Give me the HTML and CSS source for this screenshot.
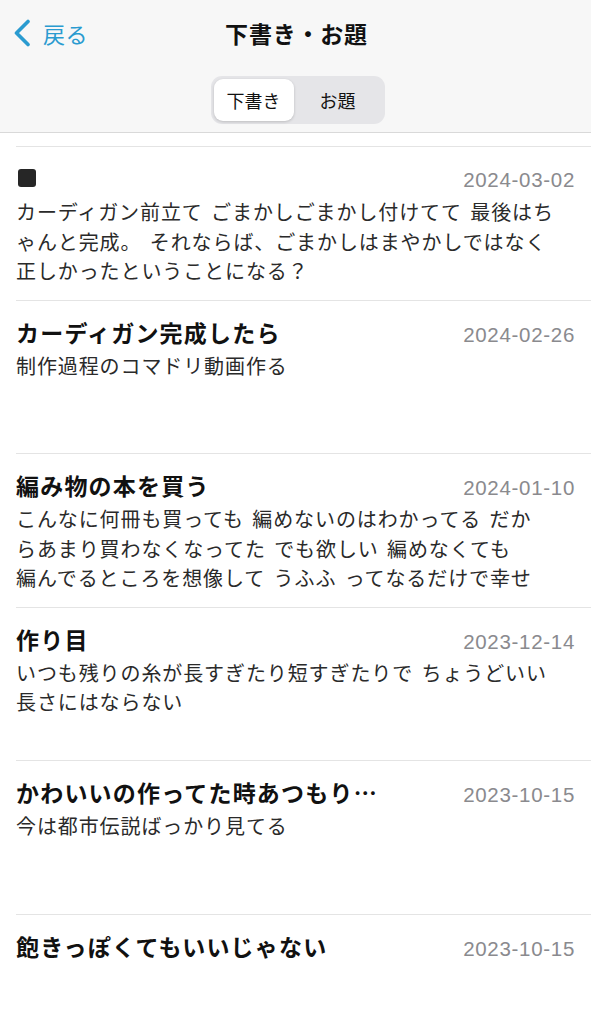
FILE: index.html
```html
<!DOCTYPE html>
<html lang="ja">
<head>
<meta charset="utf-8">
<link rel="stylesheet" href="styles.css">
</head>
<body>
<header class="header">
  <div class="topbar">
    <a class="back">
      <svg class="chev" width="18" height="28" viewBox="0 0 18 28"><path d="M15 2.5 L3.5 14 L15 25.5" fill="none" stroke="#2a9bd0" stroke-width="3.6" stroke-linecap="round" stroke-linejoin="round"/></svg>
      <span class="back-label">戻る</span>
    </a>
    <h1 class="title">下書き・お題</h1>
  </div>
  <div class="seg-wrap">
    <div class="seg">
      <div class="seg-item active">下書き</div>
      <div class="seg-item">お題</div>
    </div>
  </div>
</header>
<main class="list">
  <div class="row">
    <div class="row-head"><span class="row-title"><span class="square"></span></span><span class="date">2024-03-02</span></div>
    <p class="body">カーディガン前立て ごまかしごまかし付けてて 最後はち<br>ゃんと完成。 それならば、ごまかしはまやかしではなく<br>正しかったということになる？</p>
  </div>
  <div class="row">
    <div class="row-head"><span class="row-title">カーディガン完成したら</span><span class="date">2024-02-26</span></div>
    <p class="body">制作過程のコマドリ動画作る</p>
  </div>
  <div class="row">
    <div class="row-head"><span class="row-title">編み物の本を買う</span><span class="date">2024-01-10</span></div>
    <p class="body">こんなに何冊も買っても 編めないのはわかってる だか<br>らあまり買わなくなってた でも欲しい 編めなくても<br>編んでるところを想像して うふふ ってなるだけで幸せ</p>
  </div>
  <div class="row">
    <div class="row-head"><span class="row-title">作り目</span><span class="date">2023-12-14</span></div>
    <p class="body">いつも残りの糸が長すぎたり短すぎたりで ちょうどいい<br>長さにはならない</p>
  </div>
  <div class="row">
    <div class="row-head"><span class="row-title">かわいいの作ってた時あつもり…</span><span class="date">2023-10-15</span></div>
    <p class="body">今は都市伝説ばっかり見てる</p>
  </div>
  <div class="row">
    <div class="row-head"><span class="row-title">飽きっぽくてもいいじゃない</span><span class="date">2023-10-15</span></div>
  </div>
</main>
</body>
</html>
```

FILE: styles.css
```css
html, body {
  margin: 0;
  padding: 0;
  background: #ffffff;
}
body {
  font-family: "Noto Sans CJK JP", "Noto Sans", sans-serif;
  color: #111;
  width: 591px;
  overflow: hidden;
}
.header {
  background: #f7f7f7;
  border-bottom: 1px solid #d9d9d9;
  height: 132px;
  display: flex;
  flex-direction: column;
}
.topbar {
  position: relative;
  height: 66px;
  display: flex;
  align-items: center;
  justify-content: center;
}
.back {
  position: absolute;
  left: 13px;
  top: 19px;
  display: flex;
  align-items: center;
  gap: 12px;
  color: #2a9bd0;
}
.chev {
  display: block;
}
.back-label {
  font-size: 22px;
  line-height: 28px;
  letter-spacing: 0.5px;
}
.title {
  margin: 0;
  font-size: 23px;
  font-weight: 700;
  letter-spacing: 0.8px;
  line-height: 32px;
  padding-left: 2px;
}
.seg-wrap {
  display: flex;
  justify-content: center;
  padding-top: 10px;
  padding-left: 4px;
}
.seg {
  display: flex;
  background: #e5e5e8;
  border-radius: 11px;
  padding: 3px;
  width: 174px;
  height: 48px;
  box-sizing: border-box;
}
.seg-item {
  flex: 1;
  display: flex;
  align-items: center;
  justify-content: center;
  font-size: 18px;
  color: #111;
  border-radius: 9px;
}
.seg-item.active {
  flex: 0 0 80px;
  background: #ffffff;
  box-shadow: 0 1px 3px rgba(0,0,0,0.18);
}
.list {
  padding-top: 13px;
}
.row {
  margin-left: 16px;
  border-top: 1px solid #e4e4e4;
  height: 153.6px;
  box-sizing: border-box;
  padding: 14px 16px 0 0;
  overflow: hidden;
}
.row-head {
  display: flex;
  justify-content: space-between;
  align-items: baseline;
  height: 34px;
}
.row-title {
  font-size: 23px;
  font-weight: 700;
  letter-spacing: 1.2px;
  line-height: 34px;
  color: #111;
  display: flex;
  align-items: center;
  height: 34px;
}
.square {
  display: inline-block;
  width: 18px;
  height: 18px;
  margin-left: 2px;
  border-radius: 3px;
  background: #262626;
}
.date {
  font-family: "Liberation Sans", Arial, sans-serif;
  font-size: 20.5px;
  letter-spacing: 0.7px;
  color: #8a8a8e;
}
.body {
  margin: 2px 0 0 0;
  font-size: 20px;
  line-height: 29.5px;
  letter-spacing: 0.9px;
  word-spacing: 3px;
  color: #2a2a2a;
  white-space: nowrap;
}
```
